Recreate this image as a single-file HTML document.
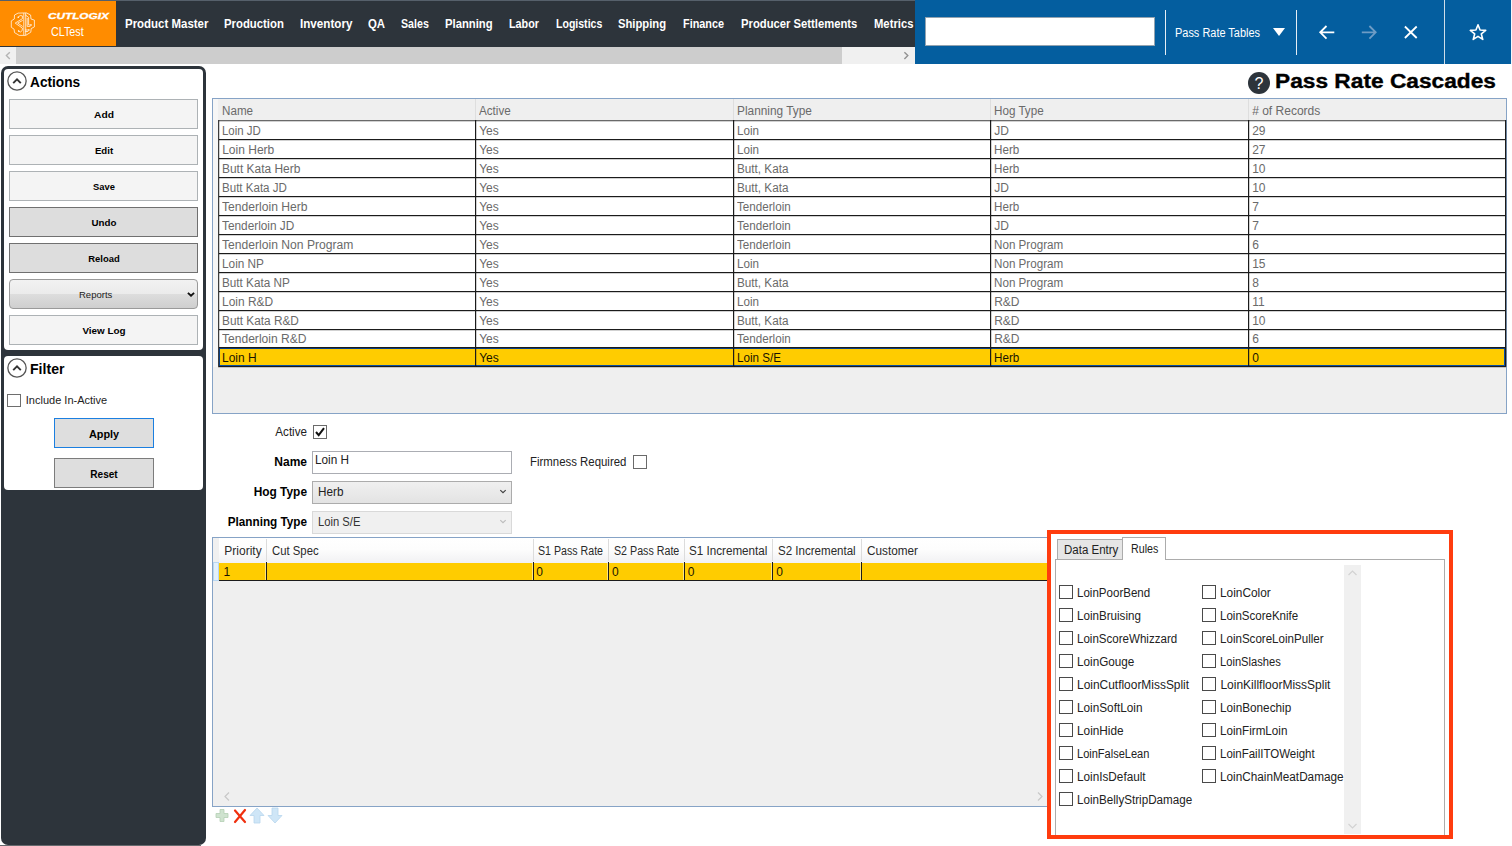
<!DOCTYPE html>
<html><head><meta charset="utf-8"><title>Pass Rate Cascades</title>
<style>
html,body{margin:0;padding:0}
body{width:1512px;height:846px;position:relative;overflow:hidden;background:#fff;font-family:"Liberation Sans",sans-serif;}
.a{position:absolute;box-sizing:border-box}
.t{position:absolute;white-space:nowrap;line-height:1;}
svg{position:absolute;overflow:visible}
</style></head><body>
<div class="a" style="left:0px;top:0px;width:915px;height:47px;background:#2d343b;"></div>
<div class="a" style="left:0px;top:1px;width:116px;height:45px;background:#ff8c00;"></div>
<div class="a" style="left:0px;top:0px;width:915px;height:1px;background:#56606b;"></div>
<div class="a" style="left:0px;top:47px;width:915px;height:17px;background:#f0f0f0;"></div>
<div class="a" style="left:16px;top:47px;width:826px;height:17px;background:#cdcdcd;"></div>
<svg style="left:4px;top:50px" width="8" height="11"><path d="M5.8 2.2 L2.4 5.6 L5.8 9" fill="none" stroke="#b4b4b4" stroke-width="1.4"/></svg>
<svg style="left:902px;top:50px" width="8" height="11"><path d="M2.4 2.2 L5.8 5.6 L2.4 9" fill="none" stroke="#929292" stroke-width="1.4"/></svg>
<div class="a" style="left:915px;top:0px;width:597px;height:64px;background:#045e9f;"></div>
<div class="a" style="left:925px;top:17px;width:230px;height:29px;background:#ffffff;border:1px solid #93a3b0;"></div>
<div class="a" style="left:1165px;top:10px;width:1px;height:45px;background:#e6eef5;"></div>
<div class="a" style="left:1296px;top:10px;width:1px;height:45px;background:#e6eef5;"></div>
<div class="a" style="left:1444px;top:0px;width:1px;height:64px;background:#cfdde9;"></div>
<div class="a" style="left:1511px;top:0px;width:1px;height:64px;background:#f4f7fa;"></div>
<svg style="left:0px;top:0px" width="46" height="46" fill="none" stroke="#fff" stroke-opacity="0.78" stroke-width="0.95" stroke-linejoin="round" stroke-linecap="round"><path d="M18.5 13.1 L26.4 12.9 L30.6 15 L31 19 L34.4 20.1 L34.4 26.9 L31.2 28.6 L30.8 32.2 L25.7 35.4 L19.2 35.4 L14.5 32.6 L14.1 29.2 L11.3 27.3 L11.3 20.9 L14.3 19 L14.5 15.4 Z"/><path d="M23.8 13.4 V34.8 M25.7 13.4 V34.8"/><path d="M18.2 17.2 L20.2 15.5 L22.4 15.9 L22.4 18.7 L15.2 23.1 L22.4 28.1 L22.2 30.6 L20.4 32 L18.6 31.1 M22.4 20.6 L17.7 23.1 L22.4 26.3"/><path d="M25.7 15.2 L28.6 17.4 V25 H31 M27.2 18.4 V26.4 H30 M25.7 30 H28.8 M25.7 31.5 H27.8"/><circle cx="18.2" cy="17.3" r="0.75" fill="#fff" stroke="none"/><circle cx="18.6" cy="31" r="0.75" fill="#fff" stroke="none"/><circle cx="31" cy="25.1" r="0.75" fill="#fff" stroke="none"/><circle cx="28.9" cy="30" r="0.75" fill="#fff" stroke="none"/></svg>
<svg style="left:1273px;top:28px" width="12" height="8"><path d="M0 0 H12 L6 8 Z" fill="#fff"/></svg>
<svg style="left:1318px;top:24px" width="18" height="17" fill="none" stroke="#fff" stroke-width="1.8"><path d="M16.3 8.3 H2.4 M8.5 2 L2.2 8.3 L8.5 14.6"/></svg>
<svg style="left:1360px;top:24px" width="18" height="17" fill="none" stroke="#6e9cc5" stroke-width="1.8"><path d="M1.8 8.3 H15.4 M9.4 2 L15.7 8.3 L9.4 14.6"/></svg>
<svg style="left:1403px;top:25px" width="16" height="15" fill="none" stroke="#fff" stroke-width="1.8"><path d="M1.9 1.5 L13.7 13 M13.7 1.5 L1.9 13"/></svg>
<svg style="left:1468px;top:23px" width="20" height="19" fill="none" stroke="#fff" stroke-width="1.6" stroke-linejoin="round"><path d="M10.00 1.80 L12.06 7.07 L17.70 7.40 L13.33 10.98 L14.76 16.45 L10.00 13.40 L5.24 16.45 L6.67 10.98 L2.30 7.40 L7.94 7.07 Z"/></svg>
<div class="a" style="left:1px;top:66px;width:205px;height:779px;background:#2d343b;border-radius:7px;"></div>
<div class="a" style="left:0px;top:845px;width:201px;height:1px;background:#666a6e;"></div>
<div class="a" style="left:4px;top:69px;width:199px;height:281px;background:#fff;border-radius:4px;"></div>
<div class="a" style="left:4px;top:356px;width:199px;height:134px;background:#fff;border-radius:4px;"></div>
<svg style="left:6.5px;top:71.4px" width="20" height="20"><circle cx="10" cy="10" r="9.15" fill="#fff" stroke="#555" stroke-width="1.3"/><path d="M6.2 12.2 L10 8.4 L13.8 12.2" fill="none" stroke="#333" stroke-width="1.9"/></svg>
<div class="a" style="left:9px;top:99px;width:189px;height:30px;background:#f4f4f4;border:1px solid #adb2b5;"></div>
<div class="a" style="left:9px;top:135px;width:189px;height:30px;background:#f4f4f4;border:1px solid #adb2b5;"></div>
<div class="a" style="left:9px;top:171px;width:189px;height:30px;background:#f4f4f4;border:1px solid #adb2b5;"></div>
<div class="a" style="left:9px;top:207px;width:189px;height:30px;background:#dddddd;border:1px solid #707070;"></div>
<div class="a" style="left:9px;top:243px;width:189px;height:30px;background:#dddddd;border:1px solid #707070;"></div>
<div class="a" style="left:9px;top:279px;width:189px;height:30px;border:1px solid #9a9a9a;border-radius:4px;background:linear-gradient(#f2f2f2 0%,#ebebeb 50%,#dddddd 50%,#cfcfcf 100%);"></div>
<svg style="left:187px;top:292px" width="8" height="6"><path d="M0.9 0.9 L4 3.7 L7.1 0.9" fill="none" stroke="#111" stroke-width="1.9"/></svg>
<div class="a" style="left:9px;top:315px;width:189px;height:30px;background:#f4f4f4;border:1px solid #adb2b5;"></div>
<svg style="left:6.5px;top:358.4px" width="20" height="20"><circle cx="10" cy="10" r="9.15" fill="#fff" stroke="#555" stroke-width="1.3"/><path d="M6.2 12.2 L10 8.4 L13.8 12.2" fill="none" stroke="#333" stroke-width="1.9"/></svg>
<div class="a" style="left:7px;top:394px;width:14px;height:13px;background:#fff;border:1px solid #6e6e6e;"></div>
<div class="a" style="left:54px;top:418px;width:100px;height:30px;background:#dedede;border:1px solid #1b7fe0;"></div>
<div class="a" style="left:54px;top:458px;width:100px;height:30px;background:#dedede;border:1px solid #7c7c7c;"></div>
<svg style="left:1247px;top:71px" width="24" height="24"><circle cx="12" cy="12" r="11" fill="#2d343b"/></svg>
<div class="a" style="left:212px;top:98px;width:1295px;height:316px;background:#efefef;border:1px solid #86a3c6;"></div>
<div class="a" style="left:213px;top:99px;width:5px;height:268px;background:#f6f6f6;"></div>
<div class="a" style="left:218px;top:120px;width:1288px;height:247px;background:#fff;"></div>
<div class="a" style="left:219px;top:348px;width:1286px;height:18px;background:#ffcc00;border:1px solid #0b4ea2;"></div>
<div class="a" style="left:218px;top:120px;width:1288px;height:1px;background:#6a6a6a;"></div>
<div class="a" style="left:218px;top:121px;width:1288px;height:1px;background:rgba(0,0,0,0.18);"></div>
<div class="a" style="left:218px;top:139px;width:1288px;height:1px;background:#1b1b1b;"></div>
<div class="a" style="left:218px;top:140px;width:1288px;height:1px;background:rgba(0,0,0,0.18);"></div>
<div class="a" style="left:218px;top:158px;width:1288px;height:1px;background:#1b1b1b;"></div>
<div class="a" style="left:218px;top:159px;width:1288px;height:1px;background:rgba(0,0,0,0.18);"></div>
<div class="a" style="left:218px;top:177px;width:1288px;height:1px;background:#1b1b1b;"></div>
<div class="a" style="left:218px;top:178px;width:1288px;height:1px;background:rgba(0,0,0,0.18);"></div>
<div class="a" style="left:218px;top:196px;width:1288px;height:1px;background:#1b1b1b;"></div>
<div class="a" style="left:218px;top:197px;width:1288px;height:1px;background:rgba(0,0,0,0.18);"></div>
<div class="a" style="left:218px;top:215px;width:1288px;height:1px;background:#1b1b1b;"></div>
<div class="a" style="left:218px;top:216px;width:1288px;height:1px;background:rgba(0,0,0,0.18);"></div>
<div class="a" style="left:218px;top:234px;width:1288px;height:1px;background:#1b1b1b;"></div>
<div class="a" style="left:218px;top:235px;width:1288px;height:1px;background:rgba(0,0,0,0.18);"></div>
<div class="a" style="left:218px;top:253px;width:1288px;height:1px;background:#1b1b1b;"></div>
<div class="a" style="left:218px;top:254px;width:1288px;height:1px;background:rgba(0,0,0,0.18);"></div>
<div class="a" style="left:218px;top:272px;width:1288px;height:1px;background:#1b1b1b;"></div>
<div class="a" style="left:218px;top:273px;width:1288px;height:1px;background:rgba(0,0,0,0.18);"></div>
<div class="a" style="left:218px;top:291px;width:1288px;height:1px;background:#1b1b1b;"></div>
<div class="a" style="left:218px;top:292px;width:1288px;height:1px;background:rgba(0,0,0,0.18);"></div>
<div class="a" style="left:218px;top:310px;width:1288px;height:1px;background:#1b1b1b;"></div>
<div class="a" style="left:218px;top:311px;width:1288px;height:1px;background:rgba(0,0,0,0.18);"></div>
<div class="a" style="left:218px;top:329px;width:1288px;height:1px;background:#1b1b1b;"></div>
<div class="a" style="left:218px;top:330px;width:1288px;height:1px;background:rgba(0,0,0,0.18);"></div>
<div class="a" style="left:218px;top:347px;width:1288px;height:1px;background:#1b1b1b;"></div>
<div class="a" style="left:218px;top:348px;width:1288px;height:1px;background:rgba(0,0,0,0.18);"></div>
<div class="a" style="left:218px;top:366px;width:1288px;height:1px;background:#1b1b1b;"></div>
<div class="a" style="left:218px;top:367px;width:1288px;height:1px;background:rgba(0,0,0,0.18);"></div>
<div class="a" style="left:218px;top:120px;width:1px;height:247px;background:#3c3c3c;"></div>
<div class="a" style="left:219px;top:120px;width:1px;height:247px;background:rgba(0,0,0,0.18);"></div>
<div class="a" style="left:475px;top:120px;width:1px;height:247px;background:#1b1b1b;"></div>
<div class="a" style="left:476px;top:120px;width:1px;height:247px;background:rgba(0,0,0,0.18);"></div>
<div class="a" style="left:733px;top:120px;width:1px;height:247px;background:#1b1b1b;"></div>
<div class="a" style="left:734px;top:120px;width:1px;height:247px;background:rgba(0,0,0,0.18);"></div>
<div class="a" style="left:990px;top:120px;width:1px;height:247px;background:#1b1b1b;"></div>
<div class="a" style="left:991px;top:120px;width:1px;height:247px;background:rgba(0,0,0,0.18);"></div>
<div class="a" style="left:1248px;top:120px;width:1px;height:247px;background:#1b1b1b;"></div>
<div class="a" style="left:1249px;top:120px;width:1px;height:247px;background:rgba(0,0,0,0.18);"></div>
<div class="a" style="left:1505px;top:120px;width:1px;height:247px;background:#1b1b1b;"></div>
<div class="a" style="left:1506px;top:120px;width:1px;height:247px;background:rgba(0,0,0,0.18);"></div>
<div class="a" style="left:475px;top:99px;width:1px;height:21px;background:#dedede;"></div>
<div class="a" style="left:733px;top:99px;width:1px;height:21px;background:#dedede;"></div>
<div class="a" style="left:990px;top:99px;width:1px;height:21px;background:#dedede;"></div>
<div class="a" style="left:1248px;top:99px;width:1px;height:21px;background:#dedede;"></div>
<div class="a" style="left:313px;top:425px;width:14px;height:14px;background:#fff;border:1px solid #6a6a6a;"></div>
<svg style="left:313px;top:425px" width="14" height="14"><path d="M3 7 L5.7 10.2 L11 3.2" fill="none" stroke="#111" stroke-width="2"/></svg>
<div class="a" style="left:312px;top:451px;width:200px;height:23px;background:#fff;border:1px solid #abadb3;"></div>
<div class="a" style="left:633px;top:455px;width:14px;height:14px;background:#fff;border:1px solid #6a6a6a;"></div>
<div class="a" style="left:312px;top:481px;width:200px;height:23px;border:1px solid #acacac;background:linear-gradient(#f0f0f0,#e3e3e3);"></div>
<svg style="left:499px;top:489px" width="8" height="6"><path d="M1.3 1.1 L4 3.7 L6.7 1.1" fill="none" stroke="#404040" stroke-width="1.15"/></svg>
<div class="a" style="left:312px;top:511px;width:200px;height:23px;background:#f0f0f0;border:1px solid #d9d9d9;"></div>
<svg style="left:499px;top:519px" width="8" height="6"><path d="M1.3 1.1 L4 3.7 L6.7 1.1" fill="none" stroke="#bcbcbc" stroke-width="1.15"/></svg>
<div class="a" style="left:212px;top:537px;width:837px;height:270px;background:#efefef;border:1px solid #86a3c6;"></div>
<div class="a" style="left:213px;top:538px;width:6px;height:24px;background:#f0f0f0;"></div>
<div class="a" style="left:219px;top:538px;width:829px;height:25px;background:linear-gradient(#ffffff 0%,#fdfdfd 45%,#f1f1f3 100%);"></div>
<div class="a" style="left:213px;top:562px;width:6px;height:19px;background:#e3f0fb;border:1px solid #b9d7f1;"></div>
<div class="a" style="left:219px;top:563px;width:829px;height:17px;background:#ffcc00;"></div>
<div class="a" style="left:219px;top:580px;width:829px;height:1px;background:#1b1b1b;"></div>
<div class="a" style="left:266px;top:539px;width:1px;height:22px;background:#dcdcdc;"></div>
<div class="a" style="left:266px;top:562px;width:1px;height:19px;background:#1b1b1b;"></div>
<div class="a" style="left:265px;top:563px;width:1px;height:17px;background:rgba(255,255,255,0.5);"></div>
<div class="a" style="left:533px;top:539px;width:1px;height:22px;background:#dcdcdc;"></div>
<div class="a" style="left:533px;top:562px;width:1px;height:19px;background:#1b1b1b;"></div>
<div class="a" style="left:532px;top:563px;width:1px;height:17px;background:rgba(255,255,255,0.5);"></div>
<div class="a" style="left:608px;top:539px;width:1px;height:22px;background:#dcdcdc;"></div>
<div class="a" style="left:608px;top:562px;width:1px;height:19px;background:#1b1b1b;"></div>
<div class="a" style="left:607px;top:563px;width:1px;height:17px;background:rgba(255,255,255,0.5);"></div>
<div class="a" style="left:684px;top:539px;width:1px;height:22px;background:#dcdcdc;"></div>
<div class="a" style="left:684px;top:562px;width:1px;height:19px;background:#1b1b1b;"></div>
<div class="a" style="left:683px;top:563px;width:1px;height:17px;background:rgba(255,255,255,0.5);"></div>
<div class="a" style="left:772px;top:539px;width:1px;height:22px;background:#dcdcdc;"></div>
<div class="a" style="left:772px;top:562px;width:1px;height:19px;background:#1b1b1b;"></div>
<div class="a" style="left:771px;top:563px;width:1px;height:17px;background:rgba(255,255,255,0.5);"></div>
<div class="a" style="left:861px;top:539px;width:1px;height:22px;background:#dcdcdc;"></div>
<div class="a" style="left:861px;top:562px;width:1px;height:19px;background:#1b1b1b;"></div>
<div class="a" style="left:860px;top:563px;width:1px;height:17px;background:rgba(255,255,255,0.5);"></div>
<svg style="left:223px;top:791px" width="8" height="11"><path d="M6 1.5 L2 5.5 L6 9.5" fill="none" stroke="#c8c8c8" stroke-width="1.2"/></svg>
<svg style="left:1036px;top:791px" width="8" height="11"><path d="M2 1.5 L6 5.5 L2 9.5" fill="none" stroke="#c8c8c8" stroke-width="1.2"/></svg>
<svg style="left:215px;top:808px" width="14" height="15"><path d="M5 1.5 h4 v4 h4 v4 h-4 v4 h-4 v-4 h-4 v-4 h4 z" fill="#cfe3cf" stroke="#b4cfb4" stroke-width="0.8"/></svg>
<svg style="left:233px;top:808px" width="14" height="16"><path d="M2 2.5 L12 14 M12 2 L2 14" fill="none" stroke="#f0300f" stroke-width="2.2" stroke-linecap="round"/></svg>
<svg style="left:249px;top:807px" width="16" height="17"><path d="M8 1 L15 8.5 H11 V16 H5 V8.5 H1 Z" fill="#cfe6f7" stroke="#b7d6ee" stroke-width="0.8"/></svg>
<svg style="left:267px;top:807px" width="16" height="17"><path d="M8 16 L15 8.5 H11 V1 H5 V8.5 H1 Z" fill="#cfe6f7" stroke="#b7d6ee" stroke-width="0.8"/></svg>
<div class="a" style="left:1051px;top:534px;width:398px;height:301px;background:#fff;"></div>
<div class="a" style="left:1055px;top:559px;width:390px;height:279px;background:#fff;border:1px solid #acacac;"></div>
<div class="a" style="left:1057px;top:539px;width:66px;height:21px;background:#e6e6e6;border:1px solid #acacac;"></div>
<div class="a" style="left:1122px;top:537px;width:44px;height:23px;background:#fff;border:1px solid #acacac;border-bottom:none;"></div>
<div class="a" style="left:1344px;top:565px;width:17px;height:269px;background:#f0f0f0;"></div>
<svg style="left:1347px;top:569px" width="11" height="8"><path d="M1.5 6 L5.5 2 L9.5 6" fill="none" stroke="#d2d2d2" stroke-width="1.2"/></svg>
<svg style="left:1347px;top:822px" width="11" height="8"><path d="M1.5 2 L5.5 6 L9.5 2" fill="none" stroke="#d2d2d2" stroke-width="1.2"/></svg>
<div class="a" style="left:1059px;top:585px;width:14px;height:14px;background:#fff;border:1px solid #4a4a4a;"></div>
<div class="a" style="left:1059px;top:608px;width:14px;height:14px;background:#fff;border:1px solid #4a4a4a;"></div>
<div class="a" style="left:1059px;top:631px;width:14px;height:14px;background:#fff;border:1px solid #4a4a4a;"></div>
<div class="a" style="left:1059px;top:654px;width:14px;height:14px;background:#fff;border:1px solid #4a4a4a;"></div>
<div class="a" style="left:1059px;top:677px;width:14px;height:14px;background:#fff;border:1px solid #4a4a4a;"></div>
<div class="a" style="left:1059px;top:700px;width:14px;height:14px;background:#fff;border:1px solid #4a4a4a;"></div>
<div class="a" style="left:1059px;top:723px;width:14px;height:14px;background:#fff;border:1px solid #4a4a4a;"></div>
<div class="a" style="left:1059px;top:746px;width:14px;height:14px;background:#fff;border:1px solid #4a4a4a;"></div>
<div class="a" style="left:1059px;top:769px;width:14px;height:14px;background:#fff;border:1px solid #4a4a4a;"></div>
<div class="a" style="left:1059px;top:792px;width:14px;height:14px;background:#fff;border:1px solid #4a4a4a;"></div>
<div class="a" style="left:1202px;top:585px;width:14px;height:14px;background:#fff;border:1px solid #4a4a4a;"></div>
<div class="a" style="left:1202px;top:608px;width:14px;height:14px;background:#fff;border:1px solid #4a4a4a;"></div>
<div class="a" style="left:1202px;top:631px;width:14px;height:14px;background:#fff;border:1px solid #4a4a4a;"></div>
<div class="a" style="left:1202px;top:654px;width:14px;height:14px;background:#fff;border:1px solid #4a4a4a;"></div>
<div class="a" style="left:1202px;top:677px;width:14px;height:14px;background:#fff;border:1px solid #4a4a4a;"></div>
<div class="a" style="left:1202px;top:700px;width:14px;height:14px;background:#fff;border:1px solid #4a4a4a;"></div>
<div class="a" style="left:1202px;top:723px;width:14px;height:14px;background:#fff;border:1px solid #4a4a4a;"></div>
<div class="a" style="left:1202px;top:746px;width:14px;height:14px;background:#fff;border:1px solid #4a4a4a;"></div>
<div class="a" style="left:1202px;top:769px;width:14px;height:14px;background:#fff;border:1px solid #4a4a4a;"></div>
<div class="a" style="left:1047px;top:530px;width:406px;height:309px;border:4px solid #ff3c0e;"></div>
<span class="t" style="top:18px;font-size:12.8px;font-weight:700;color:#fff;transform:scaleX(0.8953);transform-origin:0 0;left:124.5px;">Product Master</span>
<span class="t" style="top:18px;font-size:12.8px;font-weight:700;color:#fff;transform:scaleX(0.8868);transform-origin:0 0;left:223.9px;">Production</span>
<span class="t" style="top:18px;font-size:12.8px;font-weight:700;color:#fff;transform:scaleX(0.9096);transform-origin:0 0;left:299.8px;">Inventory</span>
<span class="t" style="top:18px;font-size:12.8px;font-weight:700;color:#fff;transform:scaleX(0.8905);transform-origin:0 0;left:368.2px;">QA</span>
<span class="t" style="top:18px;font-size:12.8px;font-weight:700;color:#fff;transform:scaleX(0.8310);transform-origin:0 0;left:400.8px;">Sales</span>
<span class="t" style="top:18px;font-size:12.8px;font-weight:700;color:#fff;transform:scaleX(0.8810);transform-origin:0 0;left:444.6px;">Planning</span>
<span class="t" style="top:18px;font-size:12.8px;font-weight:700;color:#fff;transform:scaleX(0.8436);transform-origin:0 0;left:508.9px;">Labor</span>
<span class="t" style="top:18px;font-size:12.8px;font-weight:700;color:#fff;transform:scaleX(0.8240);transform-origin:0 0;left:555.6px;">Logistics</span>
<span class="t" style="top:18px;font-size:12.8px;font-weight:700;color:#fff;transform:scaleX(0.8788);transform-origin:0 0;left:618px;">Shipping</span>
<span class="t" style="top:18px;font-size:12.8px;font-weight:700;color:#fff;transform:scaleX(0.8499);transform-origin:0 0;left:682.8px;">Finance</span>
<span class="t" style="top:18px;font-size:12.8px;font-weight:700;color:#fff;transform:scaleX(0.8792);transform-origin:0 0;left:740.6px;">Producer Settlements</span>
<span class="t" style="top:18px;font-size:12.8px;font-weight:700;color:#fff;transform:scaleX(0.8792);transform-origin:0 0;left:873.6px;">Metrics</span>
<span class="t" style="top:12px;font-size:8.8px;font-weight:700;color:#fff;transform:scaleX(1.3376);transform-origin:0 0;left:48.2px;font-style:italic;-webkit-text-stroke:0.3px #fff;">CUTLOGIX</span>
<span class="t" style="top:26px;font-size:12.8px;color:#fff;transform:scaleX(0.8408);transform-origin:0 0;left:51.3px;">CLTest</span>
<span class="t" style="top:27px;font-size:12.5px;color:#fff;transform:scaleX(0.8759);transform-origin:0 0;left:1175.1px;">Pass Rate Tables</span>
<span class="t" style="top:75px;font-size:14px;font-weight:700;transform:scaleX(0.9777);transform-origin:0 0;left:29.9px;">Actions</span>
<span class="t" style="top:110px;font-size:9.6px;font-weight:700;transform:scaleX(1.0667);transform-origin:50% 0;left:-96.2px;width:400px;text-align:center;">Add</span>
<span class="t" style="top:146px;font-size:9.6px;font-weight:700;transform:scaleX(1.0041);transform-origin:50% 0;left:-96.2px;width:400px;text-align:center;">Edit</span>
<span class="t" style="top:182px;font-size:9.6px;font-weight:700;transform:scaleX(0.9774);transform-origin:50% 0;left:-96.2px;width:400px;text-align:center;">Save</span>
<span class="t" style="top:218px;font-size:9.6px;font-weight:700;transform:scaleX(1.0157);transform-origin:50% 0;left:-96.2px;width:400px;text-align:center;">Undo</span>
<span class="t" style="top:254px;font-size:9.6px;font-weight:700;transform:scaleX(0.9844);transform-origin:50% 0;left:-96.2px;width:400px;text-align:center;">Reload</span>
<span class="t" style="top:290px;font-size:9.8px;color:#222;transform:scaleX(0.9705);transform-origin:0 0;left:79.3px;">Reports</span>
<span class="t" style="top:326px;font-size:9.6px;font-weight:700;transform:scaleX(1.0277);transform-origin:50% 0;left:-96.2px;width:400px;text-align:center;">View Log</span>
<span class="t" style="top:362px;font-size:14px;font-weight:700;transform:scaleX(1.0078);transform-origin:0 0;left:29.9px;">Filter</span>
<span class="t" style="top:395px;font-size:11px;color:#222;left:25.8px;">Include In-Active</span>
<span class="t" style="top:429px;font-size:10.8px;font-weight:700;transform:scaleX(1.0067);transform-origin:50% 0;left:-96.4px;width:400px;text-align:center;">Apply</span>
<span class="t" style="top:469px;font-size:10.8px;font-weight:700;transform:scaleX(0.9347);transform-origin:50% 0;left:-96.3px;width:400px;text-align:center;">Reset</span>
<span class="t" style="top:76px;font-size:16px;color:#fff;left:1059px;width:400px;text-align:center;">?</span>
<span class="t" style="top:71px;font-size:20px;font-weight:700;transform:scaleX(1.1358);transform-origin:0 0;left:1274.6px;-webkit-text-stroke:0.35px #000;">Pass Rate Cascades</span>
<span class="t" style="top:105px;font-size:12px;color:#6a6a6a;transform:scaleX(0.9700);transform-origin:0 0;left:222.2px;">Name</span>
<span class="t" style="top:105px;font-size:12px;color:#6a6a6a;transform:scaleX(0.9700);transform-origin:0 0;left:479.2px;">Active</span>
<span class="t" style="top:105px;font-size:12px;color:#6a6a6a;transform:scaleX(0.9876);transform-origin:0 0;left:737.2px;">Planning Type</span>
<span class="t" style="top:105px;font-size:12px;color:#6a6a6a;transform:scaleX(0.9700);transform-origin:0 0;left:994.2px;">Hog Type</span>
<span class="t" style="top:105px;font-size:12px;color:#6a6a6a;left:1252.2px;"># of Records</span>
<span class="t" style="top:125px;font-size:12px;color:#6a6a6a;transform:scaleX(0.9536);transform-origin:0 0;left:222.2px;">Loin JD</span>
<span class="t" style="top:125px;font-size:12px;color:#6a6a6a;left:479.2px;">Yes</span>
<span class="t" style="top:125px;font-size:12px;color:#6a6a6a;transform:scaleX(0.9700);transform-origin:0 0;left:737.2px;">Loin</span>
<span class="t" style="top:125px;font-size:12px;color:#6a6a6a;left:994.2px;">JD</span>
<span class="t" style="top:125px;font-size:12px;color:#6a6a6a;left:1252.2px;">29</span>
<span class="t" style="top:144px;font-size:12px;color:#6a6a6a;left:222.2px;">Loin Herb</span>
<span class="t" style="top:144px;font-size:12px;color:#6a6a6a;left:479.2px;">Yes</span>
<span class="t" style="top:144px;font-size:12px;color:#6a6a6a;transform:scaleX(0.9700);transform-origin:0 0;left:737.2px;">Loin</span>
<span class="t" style="top:144px;font-size:12px;color:#6a6a6a;transform:scaleX(0.9700);transform-origin:0 0;left:994.2px;">Herb</span>
<span class="t" style="top:144px;font-size:12px;color:#6a6a6a;left:1252.2px;">27</span>
<span class="t" style="top:163px;font-size:12px;color:#6a6a6a;transform:scaleX(0.9947);transform-origin:0 0;left:222.2px;">Butt Kata Herb</span>
<span class="t" style="top:163px;font-size:12px;color:#6a6a6a;left:479.2px;">Yes</span>
<span class="t" style="top:163px;font-size:12px;color:#6a6a6a;transform:scaleX(0.9772);transform-origin:0 0;left:737.2px;">Butt, Kata</span>
<span class="t" style="top:163px;font-size:12px;color:#6a6a6a;transform:scaleX(0.9700);transform-origin:0 0;left:994.2px;">Herb</span>
<span class="t" style="top:163px;font-size:12px;color:#6a6a6a;left:1252.2px;">10</span>
<span class="t" style="top:182px;font-size:12px;color:#6a6a6a;transform:scaleX(0.9633);transform-origin:0 0;left:222.2px;">Butt Kata JD</span>
<span class="t" style="top:182px;font-size:12px;color:#6a6a6a;left:479.2px;">Yes</span>
<span class="t" style="top:182px;font-size:12px;color:#6a6a6a;transform:scaleX(0.9772);transform-origin:0 0;left:737.2px;">Butt, Kata</span>
<span class="t" style="top:182px;font-size:12px;color:#6a6a6a;left:994.2px;">JD</span>
<span class="t" style="top:182px;font-size:12px;color:#6a6a6a;left:1252.2px;">10</span>
<span class="t" style="top:201px;font-size:12px;color:#6a6a6a;transform:scaleX(1.0104);transform-origin:0 0;left:222.2px;">Tenderloin Herb</span>
<span class="t" style="top:201px;font-size:12px;color:#6a6a6a;left:479.2px;">Yes</span>
<span class="t" style="top:201px;font-size:12px;color:#6a6a6a;transform:scaleX(0.9700);transform-origin:0 0;left:737.2px;">Tenderloin</span>
<span class="t" style="top:201px;font-size:12px;color:#6a6a6a;transform:scaleX(0.9700);transform-origin:0 0;left:994.2px;">Herb</span>
<span class="t" style="top:201px;font-size:12px;color:#6a6a6a;left:1252.2px;">7</span>
<span class="t" style="top:220px;font-size:12px;color:#6a6a6a;transform:scaleX(0.9853);transform-origin:0 0;left:222.2px;">Tenderloin JD</span>
<span class="t" style="top:220px;font-size:12px;color:#6a6a6a;left:479.2px;">Yes</span>
<span class="t" style="top:220px;font-size:12px;color:#6a6a6a;transform:scaleX(0.9700);transform-origin:0 0;left:737.2px;">Tenderloin</span>
<span class="t" style="top:220px;font-size:12px;color:#6a6a6a;left:994.2px;">JD</span>
<span class="t" style="top:220px;font-size:12px;color:#6a6a6a;left:1252.2px;">7</span>
<span class="t" style="top:239px;font-size:12px;color:#6a6a6a;transform:scaleX(1.0102);transform-origin:0 0;left:222.2px;">Tenderloin Non Program</span>
<span class="t" style="top:239px;font-size:12px;color:#6a6a6a;left:479.2px;">Yes</span>
<span class="t" style="top:239px;font-size:12px;color:#6a6a6a;transform:scaleX(0.9700);transform-origin:0 0;left:737.2px;">Tenderloin</span>
<span class="t" style="top:239px;font-size:12px;color:#6a6a6a;transform:scaleX(0.9700);transform-origin:0 0;left:994.2px;">Non Program</span>
<span class="t" style="top:239px;font-size:12px;color:#6a6a6a;left:1252.2px;">6</span>
<span class="t" style="top:258px;font-size:12px;color:#6a6a6a;transform:scaleX(0.9835);transform-origin:0 0;left:222.2px;">Loin NP</span>
<span class="t" style="top:258px;font-size:12px;color:#6a6a6a;left:479.2px;">Yes</span>
<span class="t" style="top:258px;font-size:12px;color:#6a6a6a;transform:scaleX(0.9700);transform-origin:0 0;left:737.2px;">Loin</span>
<span class="t" style="top:258px;font-size:12px;color:#6a6a6a;transform:scaleX(0.9700);transform-origin:0 0;left:994.2px;">Non Program</span>
<span class="t" style="top:258px;font-size:12px;color:#6a6a6a;left:1252.2px;">15</span>
<span class="t" style="top:277px;font-size:12px;color:#6a6a6a;transform:scaleX(0.9773);transform-origin:0 0;left:222.2px;">Butt Kata NP</span>
<span class="t" style="top:277px;font-size:12px;color:#6a6a6a;left:479.2px;">Yes</span>
<span class="t" style="top:277px;font-size:12px;color:#6a6a6a;transform:scaleX(0.9772);transform-origin:0 0;left:737.2px;">Butt, Kata</span>
<span class="t" style="top:277px;font-size:12px;color:#6a6a6a;transform:scaleX(0.9700);transform-origin:0 0;left:994.2px;">Non Program</span>
<span class="t" style="top:277px;font-size:12px;color:#6a6a6a;left:1252.2px;">8</span>
<span class="t" style="top:296px;font-size:12px;color:#6a6a6a;transform:scaleX(0.9949);transform-origin:0 0;left:222.2px;">Loin R&amp;D</span>
<span class="t" style="top:296px;font-size:12px;color:#6a6a6a;left:479.2px;">Yes</span>
<span class="t" style="top:296px;font-size:12px;color:#6a6a6a;transform:scaleX(0.9700);transform-origin:0 0;left:737.2px;">Loin</span>
<span class="t" style="top:296px;font-size:12px;color:#6a6a6a;left:994.2px;">R&amp;D</span>
<span class="t" style="top:296px;font-size:12px;color:#6a6a6a;left:1252.2px;">11</span>
<span class="t" style="top:315px;font-size:12px;color:#6a6a6a;transform:scaleX(0.9853);transform-origin:0 0;left:222.2px;">Butt Kata R&amp;D</span>
<span class="t" style="top:315px;font-size:12px;color:#6a6a6a;left:479.2px;">Yes</span>
<span class="t" style="top:315px;font-size:12px;color:#6a6a6a;transform:scaleX(0.9772);transform-origin:0 0;left:737.2px;">Butt, Kata</span>
<span class="t" style="top:315px;font-size:12px;color:#6a6a6a;left:994.2px;">R&amp;D</span>
<span class="t" style="top:315px;font-size:12px;color:#6a6a6a;left:1252.2px;">10</span>
<span class="t" style="top:333px;font-size:12px;color:#6a6a6a;transform:scaleX(1.0054);transform-origin:0 0;left:222.2px;">Tenderloin R&amp;D</span>
<span class="t" style="top:333px;font-size:12px;color:#6a6a6a;left:479.2px;">Yes</span>
<span class="t" style="top:333px;font-size:12px;color:#6a6a6a;transform:scaleX(0.9700);transform-origin:0 0;left:737.2px;">Tenderloin</span>
<span class="t" style="top:333px;font-size:12px;color:#6a6a6a;left:994.2px;">R&amp;D</span>
<span class="t" style="top:333px;font-size:12px;color:#6a6a6a;left:1252.2px;">6</span>
<span class="t" style="top:352px;font-size:12px;color:#1a1400;transform:scaleX(0.9946);transform-origin:0 0;left:222.2px;">Loin H</span>
<span class="t" style="top:352px;font-size:12px;color:#1a1400;left:479.2px;">Yes</span>
<span class="t" style="top:352px;font-size:12px;color:#1a1400;transform:scaleX(0.9700);transform-origin:0 0;left:737.2px;">Loin S/E</span>
<span class="t" style="top:352px;font-size:12px;color:#1a1400;transform:scaleX(0.9700);transform-origin:0 0;left:994.2px;">Herb</span>
<span class="t" style="top:352px;font-size:12px;color:#1a1400;left:1252.2px;">0</span>
<span class="t" style="top:426px;font-size:12px;color:#222;transform:scaleX(0.9698);transform-origin:100% 0;left:-93.30000000000001px;width:400px;text-align:right;">Active</span>
<span class="t" style="top:456px;font-size:12px;font-weight:700;left:-93px;width:400px;text-align:right;">Name</span>
<span class="t" style="top:454px;font-size:12px;color:#222;transform:scaleX(0.9802);transform-origin:0 0;left:315.3px;">Loin H</span>
<span class="t" style="top:456px;font-size:12px;color:#222;transform:scaleX(0.9509);transform-origin:0 0;left:530.3px;">Firmness Required</span>
<span class="t" style="top:486px;font-size:12px;font-weight:700;transform:scaleX(0.9911);transform-origin:100% 0;left:-93px;width:400px;text-align:right;">Hog Type</span>
<span class="t" style="top:486px;font-size:12px;color:#222;transform:scaleX(0.9763);transform-origin:0 0;left:318.3px;">Herb</span>
<span class="t" style="top:516px;font-size:12px;font-weight:700;transform:scaleX(0.9775);transform-origin:100% 0;left:-93px;width:400px;text-align:right;">Planning Type</span>
<span class="t" style="top:516px;font-size:12px;color:#333;transform:scaleX(0.9344);transform-origin:0 0;left:318.3px;">Loin S/E</span>
<span class="t" style="top:545px;font-size:12px;color:#2a2a2a;left:224.3px;">Priority</span>
<span class="t" style="top:545px;font-size:12px;color:#2a2a2a;transform:scaleX(0.9441);transform-origin:0 0;left:272.2px;">Cut Spec</span>
<span class="t" style="top:545px;font-size:12px;color:#2a2a2a;transform:scaleX(0.8859);transform-origin:0 0;left:538.3px;">S1 Pass Rate</span>
<span class="t" style="top:545px;font-size:12px;color:#2a2a2a;transform:scaleX(0.8899);transform-origin:0 0;left:614px;">S2 Pass Rate</span>
<span class="t" style="top:545px;font-size:12px;color:#2a2a2a;transform:scaleX(0.9713);transform-origin:0 0;left:689.3px;">S1 Incremental</span>
<span class="t" style="top:545px;font-size:12px;color:#2a2a2a;transform:scaleX(0.9626);transform-origin:0 0;left:778.3px;">S2 Incremental</span>
<span class="t" style="top:545px;font-size:12px;color:#2a2a2a;transform:scaleX(0.9805);transform-origin:0 0;left:866.7px;">Customer</span>
<span class="t" style="top:566px;font-size:12px;color:#1a1400;left:223.5px;">1</span>
<span class="t" style="top:566px;font-size:12px;color:#1a1400;left:536.3px;">0</span>
<span class="t" style="top:566px;font-size:12px;color:#1a1400;left:612px;">0</span>
<span class="t" style="top:566px;font-size:12px;color:#1a1400;left:687.7px;">0</span>
<span class="t" style="top:566px;font-size:12px;color:#1a1400;left:776.3px;">0</span>
<span class="t" style="top:544px;font-size:12px;color:#222;transform:scaleX(0.9576);transform-origin:0 0;left:1063.9px;">Data Entry</span>
<span class="t" style="top:543px;font-size:12px;color:#222;transform:scaleX(0.8896);transform-origin:0 0;left:1130.6px;">Rules</span>
<span class="t" style="top:587px;font-size:12px;color:#222;transform:scaleX(0.9624);transform-origin:0 0;left:1077.4px;">LoinPoorBend</span>
<span class="t" style="top:610px;font-size:12px;color:#222;transform:scaleX(0.9675);transform-origin:0 0;left:1077.4px;">LoinBruising</span>
<span class="t" style="top:633px;font-size:12px;color:#222;transform:scaleX(0.9630);transform-origin:0 0;left:1077.4px;">LoinScoreWhizzard</span>
<span class="t" style="top:656px;font-size:12px;color:#222;transform:scaleX(0.9775);transform-origin:0 0;left:1077.4px;">LoinGouge</span>
<span class="t" style="top:679px;font-size:12px;color:#222;transform:scaleX(0.9945);transform-origin:0 0;left:1077.4px;">LoinCutfloorMissSplit</span>
<span class="t" style="top:702px;font-size:12px;color:#222;transform:scaleX(0.9815);transform-origin:0 0;left:1077.4px;">LoinSoftLoin</span>
<span class="t" style="top:725px;font-size:12px;color:#222;transform:scaleX(0.9836);transform-origin:0 0;left:1077.4px;">LoinHide</span>
<span class="t" style="top:748px;font-size:12px;color:#222;transform:scaleX(0.9195);transform-origin:0 0;left:1077.4px;">LoinFalseLean</span>
<span class="t" style="top:771px;font-size:12px;color:#222;transform:scaleX(0.9793);transform-origin:0 0;left:1077.4px;">LoinIsDefault</span>
<span class="t" style="top:794px;font-size:12px;color:#222;transform:scaleX(0.9702);transform-origin:0 0;left:1077.4px;">LoinBellyStripDamage</span>
<span class="t" style="top:587px;font-size:12px;color:#222;transform:scaleX(0.9888);transform-origin:0 0;left:1220.4px;">LoinColor</span>
<span class="t" style="top:610px;font-size:12px;color:#222;transform:scaleX(0.9608);transform-origin:0 0;left:1220.4px;">LoinScoreKnife</span>
<span class="t" style="top:633px;font-size:12px;color:#222;transform:scaleX(0.9646);transform-origin:0 0;left:1220.4px;">LoinScoreLoinPuller</span>
<span class="t" style="top:656px;font-size:12px;color:#222;transform:scaleX(0.9298);transform-origin:0 0;left:1220.4px;">LoinSlashes</span>
<span class="t" style="top:679px;font-size:12px;color:#222;left:1220.4px;">LoinKillfloorMissSplit</span>
<span class="t" style="top:702px;font-size:12px;color:#222;transform:scaleX(0.9789);transform-origin:0 0;left:1220.4px;">LoinBonechip</span>
<span class="t" style="top:725px;font-size:12px;color:#222;transform:scaleX(0.9715);transform-origin:0 0;left:1220.4px;">LoinFirmLoin</span>
<span class="t" style="top:748px;font-size:12px;color:#222;transform:scaleX(0.9572);transform-origin:0 0;left:1220.4px;">LoinFailITOWeight</span>
<span class="t" style="top:771px;font-size:12px;color:#222;transform:scaleX(0.9803);transform-origin:0 0;left:1220.4px;">LoinChainMeatDamage</span>

</body></html>
